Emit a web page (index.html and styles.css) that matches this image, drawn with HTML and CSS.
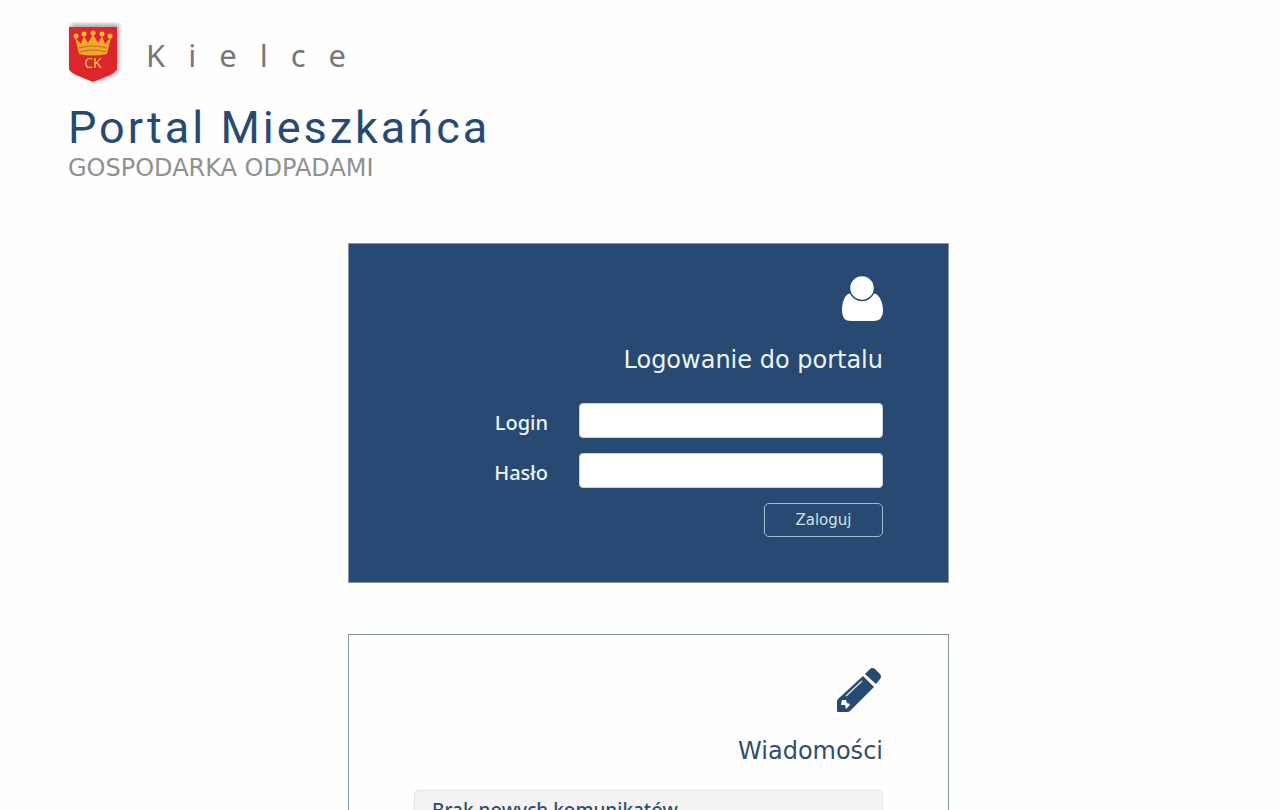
FILE: index.html
```html
<!DOCTYPE html>
<html lang="pl">
<head>
<meta charset="utf-8">
<meta name="viewport" content="width=device-width, initial-scale=1">
<title>Portal Mieszkańca</title>
<link rel="stylesheet" href="styles.css">
</head>
<body>
<header class="header">
  <div class="brand">
    <svg class="crest" viewBox="0 0 54 62" width="54" height="62" aria-hidden="true">
      <path class="crest-shadow" d="M3 2H51V47Q48 54 30 59Q8 53 3 46Z"/>
      <path fill="#dc252c" d="M1 5H49V47Q48 50 42 53L25 60L8 53Q2 50 1 47Z"/>
      <path fill="#eda92b" d="M11 32L7 15L13 22L16 14L20 21L25 12L30 21L34 14L37 22L43 15L39 32Q25 35 11 32Z"/>
      <g fill="#f5bd30"><circle cx="8" cy="14" r="2.500"/><circle cx="16" cy="12" r="2.500"/><circle cx="25" cy="11" r="2.500"/><circle cx="34" cy="12" r="2.500"/><circle cx="42" cy="14" r="2.500"/></g>
      <path fill="none" stroke="#c96a24" stroke-width="1.200" d="M12 30Q25 26 38 30M11 26Q25 22 39 26"/>
      <text class="crest-text" x="25" y="46" text-anchor="middle">CK</text>
    </svg>
    <span class="city">Kielce</span>
  </div>
  <h1 class="title">Portal Mieszkańca</h1>
  <p class="subtitle">GOSPODARKA ODPADAMI</p>
</header>
<main class="main">
  <section class="card card-login">
    <svg class="icon" viewBox="0 0 42 46" width="42" height="46" fill="#fff" aria-hidden="true">
      <path d="M10 17C4 18 1 25 1 35Q1 45 10 45H32Q42 45 42 35C42 25 38 18 32 17Q21 31 10 17Z"/>
      <circle cx="21" cy="12" r="12.500" stroke="#274972" stroke-width="1.500"/>
    </svg>
    <h2 class="card-title">Logowanie do portalu</h2>
    <form class="form">
      <div class="field">
        <label class="label" for="login">Login</label>
        <input class="input" id="login" type="text">
      </div>
      <div class="field">
        <label class="label" for="password">Hasło</label>
        <input class="input" id="password" type="password">
      </div>
      <button class="button" type="submit">Zaloguj</button>
    </form>
  </section>
  <section class="card card-news">
    <svg class="icon" viewBox="0 0 46 46" width="46" height="46" aria-hidden="true">
      <g fill="#274972">
        <path d="M26 9L37 20L13 44Q12 45 10 45H1Q0 45 0 44V35Q0 33 1 32Z"/>
        <path d="M28 7L33 2Q35 0 38 2L43 7Q45 10 43 12L39 17Z"/>
      </g>
      <path d="M9 29L25 14" stroke="#d5dee8" stroke-width="1.500"/>
      <path fill="#fff" d="M5 33L9 33L10 36L13 37L12 39L9 42L8 38L4 38Z"/>
    </svg>
    <h2 class="card-title">Wiadomości</h2>
    <p class="notice">Brak nowych komunikatów.</p>
  </section>
</main>
</body>
</html>
```

FILE: styles.css
```css
* {
  box-sizing: border-box;
}

body {
  margin: 0;
  background: #fefefe;
  color: #2f4e6e;
  font-family: "DejaVu Sans", Verdana, sans-serif;
}

.header {
  padding: 22px 68px 0;
}

.brand {
  display: flex;
  align-items: center;
  gap: 24px;
}

.crest-shadow {
  fill: #aaa;
  filter: blur(2px);
}

.crest-text {
  fill: #f7cf3c;
  font: 14px "Open Sans", sans-serif;
}

.city {
  padding-top: 4px;
  color: #777;
  font: 31px/58px "Noto Sans", sans-serif;
  letter-spacing: 23px;
}

.title {
  margin: 16px 0 0;
  color: #274972;
  font: 400 45px/56px Roboto, sans-serif;
  letter-spacing: 3px;
}

.subtitle {
  margin: 0;
  color: #909090;
  font-size: 24px;
  line-height: 24px;
}

.main {
  display: flex;
  flex-direction: column;
  align-items: center;
  gap: 51px;
  padding: 63px 51px 48px 68px;
}

.card {
  display: flex;
  flex-direction: column;
  align-items: flex-end;
  width: 100%;
  max-width: 601px;
  padding: 32px 65px 45px;
  border: 1px solid #84969f;
}

.card-login {
  background: #274972;
  color: #eaf4f4;
}

.card-title {
  margin: 20px 0 0;
  font-size: 24px;
  font-weight: 400;
  line-height: 36px;
}

.form {
  display: flex;
  flex-direction: column;
  align-items: flex-end;
  gap: 15px;
  width: 100%;
  margin-top: 25px;
}

.field {
  display: flex;
  justify-content: flex-end;
  gap: 31px;
  width: 100%;
}

.label {
  font: 500 20px/40px "Noto Sans", sans-serif;
  height: 35px;
}

.input {
  width: 304px;
  height: 35px;
  padding: 0 10px;
  border: 1px solid #c6d3dc;
  border-radius: 4px;
  background: #fff;
  font-size: 16px;
}

.button {
  width: 119px;
  height: 34px;
  border: 1px solid #9fc0cb;
  border-radius: 5px;
  background: transparent;
  color: #cfe0e4;
  font: 15px "DejaVu Sans", Verdana, sans-serif;
}

.notice {
  width: 100%;
  margin: 21px 0 0;
  padding: 6px 17px;
  border: 1px solid #e6e6e6;
  border-radius: 4px;
  background: #f3f3f3;
  font: 500 19px/26px "Noto Sans", sans-serif;
}
```
